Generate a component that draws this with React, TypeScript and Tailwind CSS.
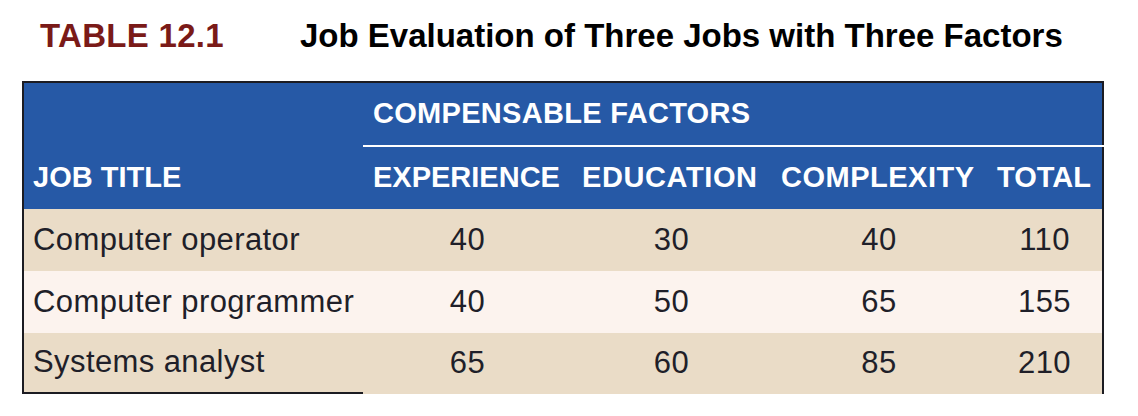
const rows = [
  { title: 'Computer operator', exp: 40, edu: 30, cx: 40, total: 110, bg: 'bg-[#eadcc7]', h: 'h-[62px]' },
  { title: 'Computer programmer', exp: 40, edu: 50, cx: 65, total: 155, bg: 'bg-[#fcf3ee]', h: 'h-[62px]' },
  { title: 'Systems analyst', exp: 65, edu: 60, cx: 85, total: 210, bg: 'bg-[#eadcc7]', h: 'h-[61px]' },
]

export default function App() {
  return (
    <main className="w-[1138px] h-[416px] bg-white font-['Liberation_Sans',Arial,sans-serif]">
      <div className="flex gap-[76px] pl-[40px] pt-[19px] text-[33px] leading-[33px] font-bold">
        <span className="text-[#7a1a18] tracking-[0.3px]">TABLE 12.1</span>
        <span className="text-black">Job Evaluation of Three Jobs with Three Factors</span>
      </div>

      <table className="mt-[29px] ml-[22px] border-separate border-spacing-0 table-fixed">
        <colgroup>
          <col className="w-[341px]" />
          <col className="w-[209px]" />
          <col className="w-[199px]" />
          <col className="w-[216px]" />
          <col className="w-[117px]" />
        </colgroup>
        <thead className="text-white text-[29px] font-bold text-left">
          <tr className="h-[66px]">
            <th className="bg-[#2659a6] border-l-2 border-t-2 border-[#1c1c22] p-0"></th>
            <th
              colSpan={4}
              className="bg-[#2659a6] border-t-2 border-r-2 border-t-[#1c1c22] border-r-[#1c1c22] pl-[10px] tracking-[0.3px] align-middle"
            >
              <div className="h-[64px] flex items-center border-b-2 border-white -ml-[10px] pl-[10px] -mr-[2px]">
                COMPENSABLE FACTORS
              </div>
            </th>
          </tr>
          <tr className="h-[62px]">
            <th className="bg-[#2659a6] border-l-2 border-[#1c1c22] pl-[9px] font-bold">JOB TITLE</th>
            <th className="bg-[#2659a6] pl-[10px]">EXPERIENCE</th>
            <th className="bg-[#2659a6] pl-[10px] tracking-[0.6px]">EDUCATION</th>
            <th className="bg-[#2659a6] pl-[10px] tracking-[0.5px]">COMPLEXITY</th>
            <th className="bg-[#2659a6] pl-[10px] border-r-2 border-[#1c1c22]">TOTAL</th>
          </tr>
        </thead>
        <tbody className="text-[#1f1f29] text-[31px] tracking-[0.4px]">
          {rows.map((r, i) => (
            <tr key={r.title} className={r.h}>
              <td
                className={`${r.bg} border-l-2 border-[#1c1c22] pl-[9px] p-0 ${
                  i === rows.length - 1 ? 'border-b-2' : ''
                }`}
              >
                {r.title}
              </td>
              <td className={`${r.bg} text-center p-0`}>{r.exp}</td>
              <td className={`${r.bg} text-center p-0`}>{r.edu}</td>
              <td className={`${r.bg} text-center p-0`}>{r.cx}</td>
              <td className={`${r.bg} text-center p-0 border-r-2 border-[#1c1c22]`}>{r.total}</td>
            </tr>
          ))}
        </tbody>
      </table>
    </main>
  )
}
